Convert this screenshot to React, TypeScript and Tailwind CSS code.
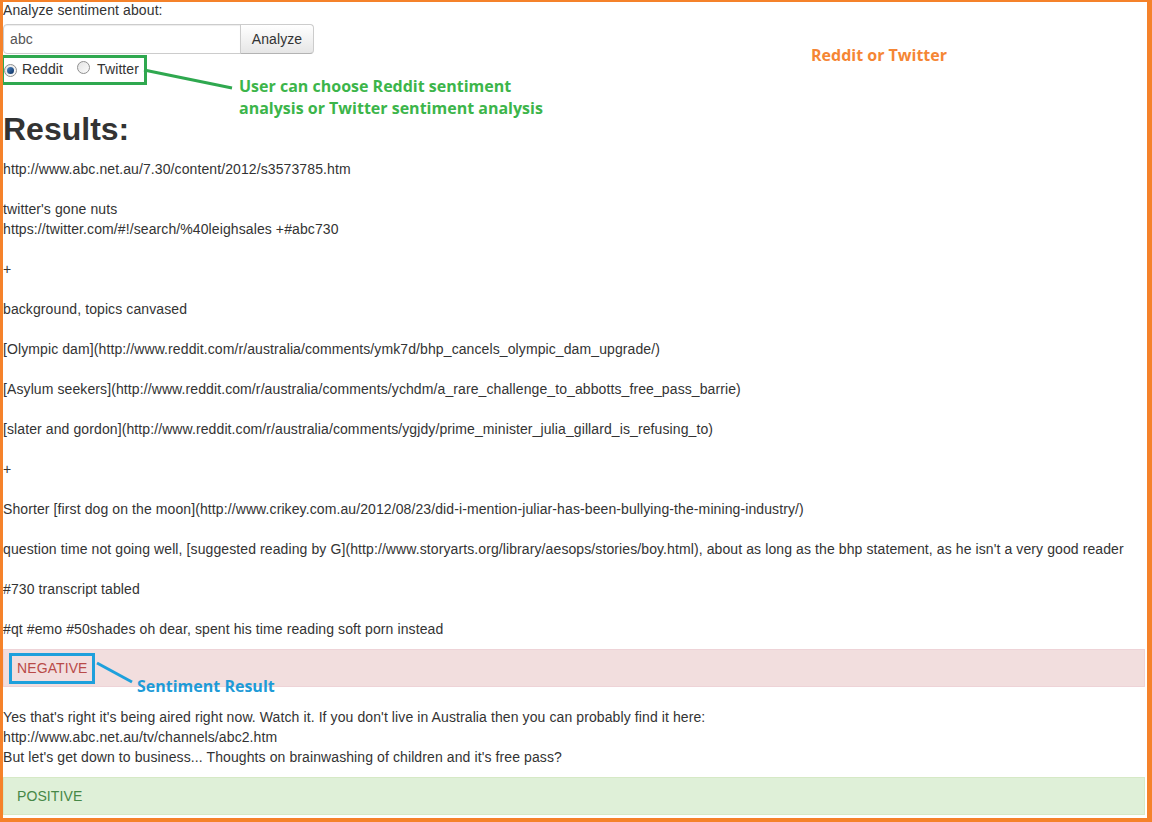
import React from 'react';

const lines: string[] = [
  'http://www.abc.net.au/7.30/content/2012/s3573785.htm',
  '',
  "twitter's gone nuts",
  'https://twitter.com/#!/search/%40leighsales +#abc730',
  '',
  '+',
  '',
  'background, topics canvased',
  '',
  '[Olympic dam](http://www.reddit.com/r/australia/comments/ymk7d/bhp_cancels_olympic_dam_upgrade/)',
  '',
  '[Asylum seekers](http://www.reddit.com/r/australia/comments/ychdm/a_rare_challenge_to_abbotts_free_pass_barrie)',
  '',
  '[slater and gordon](http://www.reddit.com/r/australia/comments/ygjdy/prime_minister_julia_gillard_is_refusing_to)',
  '',
  '+',
  '',
  'Shorter [first dog on the moon](http://www.crikey.com.au/2012/08/23/did-i-mention-juliar-has-been-bullying-the-mining-industry/)',
  '',
  'question time not going well, [suggested reading by G](http://www.storyarts.org/library/aesops/stories/boy.html), about as long as the bhp statement, as he isn\'t a very good reader',
  '',
  '#730 transcript tabled',
  '',
  '#qt #emo #50shades oh dear, spent his time reading soft porn instead',
];

const second: string[] = [
  "Yes that's right it's being aired right now. Watch it. If you don't live in Australia then you can probably find it here:",
  'http://www.abc.net.au/tv/channels/abc2.htm',
  "But let's get down to business... Thoughts on brainwashing of children and it's free pass?",
];

function Radio({ checked }: { checked?: boolean }) {
  return (
    <span className="inline-flex items-center justify-center w-[13px] h-[13px] rounded-full border border-[#8f8f8f] bg-gradient-to-br from-[#e4e4e4] to-[#fbfbfb]">
      {checked && (
        <span className="w-[7px] h-[7px] rounded-full bg-gradient-to-br from-[#4a86c8] to-[#0c2f5e]" />
      )}
    </span>
  );
}

export default function App() {
  const body = { fontFamily: '"Liberation Sans", Arial, sans-serif' };
  const note = { fontFamily: '"Open Sans", Lato, sans-serif' };

  return (
    <div
      className="relative w-[1152px] h-[822px] box-border overflow-hidden bg-white border-[#f5822a] border-t-2 border-l-[3px] border-r-[5px] border-b-4 text-[14px] text-[#333] tracking-[0.1px]"
      style={body}
    >
      <div className="leading-[16px] h-[16px]">Analyze sentiment about:</div>

      <div className="flex mt-[6px] h-[30px]">
        <div className="w-[238px] h-[30px] box-border border border-[#ccc] rounded-l-[4px] shadow-[inset_0_1px_1px_rgba(0,0,0,0.075)] px-[6px] flex items-center text-[#555]">
          abc
        </div>
        <div className="w-[74px] h-[30px] box-border border border-[#ccc] border-b-[#b3b3b3] -ml-px rounded-r-[4px] bg-gradient-to-b from-white to-[#e6e6e6] flex items-center justify-center text-[#333]">
          Analyze
        </div>
      </div>

      <div className="flex items-center h-[30px]">
        <span className="ml-[1px]"><Radio checked /></span>
        <span className="ml-[5px]">Reddit</span>
        <span className="ml-[14px]"><Radio /></span>
        <span className="ml-[7px]">Twitter</span>
      </div>

      <h1 className="mt-[25px] leading-[40px] text-[32px] font-bold text-[#333] tracking-normal">Results:</h1>

      <div className="mt-[10px]">
        {lines.map((l, i) => (
          <div key={i} className="leading-[20px] h-[20px] whitespace-nowrap">{l}</div>
        ))}
      </div>

      <div className="mt-[10px] mr-[2px] h-[38px] box-border border border-[#eed3d7] bg-[#f2dede] text-[#b94a48] pl-[13px] flex items-center">
        NEGATIVE
      </div>

      <div className="mt-[20px]">
        {second.map((l, i) => (
          <div key={i} className="leading-[20px] h-[20px] whitespace-nowrap">{l}</div>
        ))}
      </div>

      <div className="mt-[10px] mr-[2px] h-[38px] box-border border border-[#d6e9c6] bg-[#dff0d8] text-[#468847] pl-[13px] flex items-center">
        POSITIVE
      </div>

      {/* annotations */}
      <div className="absolute left-[-2px] top-[53px] w-[146px] h-[30px] border-[3px] border-[#2fa84f]" />
      <div className="absolute left-[6px] top-[651px] w-[86px] h-[31px] border-[3px] border-[#1ea0dc]" />

      <svg className="absolute left-0 top-0 pointer-events-none" width="1152" height="822">
        <line x1="141" y1="68" x2="229" y2="86" stroke="#2fa84f" strokeWidth="3" />
        <line x1="94" y1="661" x2="129" y2="680" stroke="#1ea0dc" strokeWidth="3" />
      </svg>

      <div
        className="absolute left-[236px] top-[73px] text-[16px] leading-[22px] font-bold text-[#3cb54a] tracking-normal"
        style={note}
      >
        User can choose Reddit sentiment
        <br />
        analysis or Twitter sentiment analysis
      </div>

      <div
        className="absolute left-[134px] top-[673px] text-[16px] leading-[22px] font-bold text-[#1e9bd7] tracking-normal"
        style={note}
      >
        Sentiment Result
      </div>

      <div
        className="absolute left-[808px] top-[42px] text-[16px] leading-[22px] font-bold text-[#f58634] tracking-normal"
        style={note}
      >
        Reddit or Twitter
      </div>
    </div>
  );
}
